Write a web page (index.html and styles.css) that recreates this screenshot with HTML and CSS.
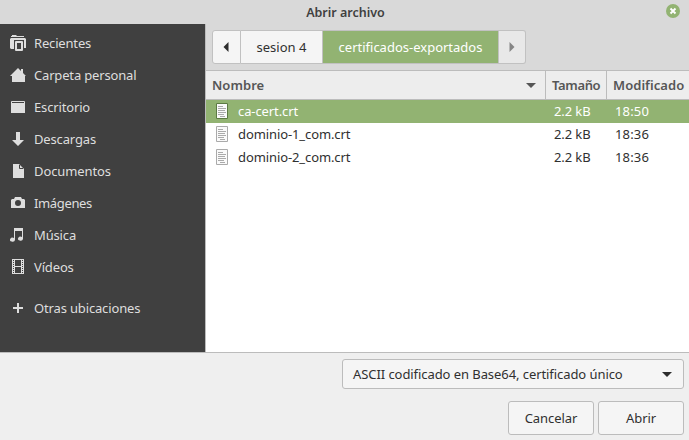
FILE: index.html
```html
<!DOCTYPE html>
<html lang="es">
<head>
<meta charset="utf-8">
<title>Abrir archivo</title>
<link rel="stylesheet" href="styles.css">
</head>
<body>
<div class="dialog">
  <header class="titlebar">
    <h1>Abrir archivo</h1>
    <button class="close" aria-label="Cerrar"><svg width="14" height="14" viewBox="0 0 14 14"><circle cx="7" cy="7" r="7" fill="#92b372"/><path d="M4.500 4.500l5 5M9.500 4.500l-5 5" stroke="#fff" stroke-width="1.900"/></svg></button>
  </header>
  <div class="main">
    <nav class="sidebar">
      <a class="place recent"><svg viewBox="0 0 16 16"><path d="M2 1V0h4l1 1h7v1H1V1zM0 4l1-1h14l1 1v9h-2V5H4v9H1l-1-1z"/><path d="M6 7h6v8H6z" fill="none" stroke="#dedede" stroke-width="2" stroke-linejoin="round"/></svg><span>Recientes</span></a>
      <a class="place home"><svg viewBox="0 0 16 16"><path d="M8 1l3 3V2h2v4l3 3h-1v6H2V9H0z"/></svg><span>Carpeta personal</span></a>
      <a class="place"><svg viewBox="0 0 16 16"><path d="M1 2.500l.5-.5h13l.5.5V14H1z"/><path d="M2 3.500h12" stroke="#404040"/></svg><span>Escritorio</span></a>
      <a class="place"><svg viewBox="0 0 16 16"><path d="M6 1h4v8h4l-6 6-6-6h4z"/></svg><span>Descargas</span></a>
      <a class="place documents"><svg viewBox="0 0 16 16"><path d="M3 1h6l5 5v9H3z"/><path d="M9.500 2v3.500H13" fill="none" stroke="#404040"/></svg><span>Documentos</span></a>
      <a class="place images"><svg viewBox="0 0 16 16"><path fill-rule="evenodd" d="M1 5l1-1h2l1-2h6l1 2h2l1 1v8H1zM8 5a3 3 0 100 6 3 3 0 000-6z"/></svg><span>Imágenes</span></a>
      <a class="place"><svg viewBox="0 0 16 16"><path d="M4 1h9v11a2.500 2 0 1 1-1-2V4H5v9a2.500 2 0 1 1-1-2z"/></svg><span>Música</span></a>
      <a class="place"><svg viewBox="0 0 16 16"><path fill-rule="evenodd" d="M2 0h12v15H2zM5 1h6v6H5zM5 8h6v6H5z"/><path d="M3.500 1v13M12.500 1v13" stroke="#404040" stroke-dasharray="1 1"/></svg><span>Vídeos</span></a>
      <a class="place other"><svg viewBox="0 0 16 16"><path d="M7 3h2v4h4v2H9v4H7V9H3V7h4z"/></svg><span>Otras ubicaciones</span></a>
    </nav>
    <section class="content">
      <div class="pathbar">
        <button class="step"><svg width="6" height="10" viewBox="0 0 6 10"><path d="M5.500 0v10L.5 5z" fill="#2d2d2d"/></svg></button>
        <button class="crumb parent"><span>sesion 4</span></button>
        <button class="crumb current"><span>certificados-exportados</span></button>
        <button class="step next"><svg width="6" height="10" viewBox="0 0 6 10"><path d="M.5 0v10l5-5z" fill="#858585"/></svg></button>
      </div>
      <div class="files">
        <div class="head row">
          <div><span>Nombre</span><svg class="sort" width="10" height="5" viewBox="0 0 10 5"><path d="M0 0h10L5 5z" fill="#555"/></svg></div>
          <div><span class="size-title">Tamaño</span></div>
          <div><span>Modificado</span></div>
        </div>
        <div class="file row selected">
          <div><svg class="doc" viewBox="0 0 12 16"><path d="M.5.5h11v15H.5z"/><path d="M2 3.500h5M2 5.500h8M2 7.500h7M2 9.500h8M2 11.500h6M4 13.500h5"/></svg><span>ca-cert.crt</span></div><div><span>2.2 kB</span></div><div><span class="time">18:50</span></div>
        </div>
        <div class="file row">
          <div><svg class="doc" viewBox="0 0 12 16"><path d="M.5.5h11v15H.5z"/><path d="M2 3.500h5M2 5.500h8M2 7.500h7M2 9.500h8M2 11.500h6M4 13.500h5"/></svg><span>dominio-1_com.crt</span></div><div><span>2.2 kB</span></div><div><span class="time">18:36</span></div>
        </div>
        <div class="file row">
          <div><svg class="doc" viewBox="0 0 12 16"><path d="M.5.5h11v15H.5z"/><path d="M2 3.500h5M2 5.500h8M2 7.500h7M2 9.500h8M2 11.500h6M4 13.500h5"/></svg><span>dominio-2_com.crt</span></div><div><span>2.2 kB</span></div><div><span class="time">18:36</span></div>
        </div>
      </div>
    </section>
  </div>
  <footer class="actions">
    <button class="filter"><span>ASCII codificado en Base64, certificado único</span><svg width="10" height="5" viewBox="0 0 10 5"><path d="M0 0h10L5 5z" fill="#2d2d2d"/></svg></button>
    <div class="buttons">
      <button><span>Cancelar</span></button>
      <button><span>Abrir</span></button>
    </div>
  </footer>
</div>
</body>
</html>
```
FILE: styles.css
```css
* { box-sizing: border-box; }
body { margin: 0; font: 13px/18px "Noto Sans", "Open Sans", sans-serif; color: #303030; }
button { font: inherit; color: inherit; padding: 0; border: 1px solid #bcbcbc; background: #f5f5f5; display: flex; align-items: center; justify-content: center; }
span { white-space: nowrap; }
svg { display: block; flex: none; }
.dialog { width: 689px; height: 440px; display: flex; flex-direction: column; background: #efefef; overflow: hidden; }
.titlebar { flex: none; height: 24px; display: grid; grid-template-columns: 1fr auto 1fr; background: #d9d9d9; align-items: center; padding-right: 9px; }
.titlebar h1 { grid-column: 2; margin: 2px 0 0 11px; font-size: 12.5px; line-height: 18px; font-weight: 600; color: #404040; }
.close { justify-self: end; border: 0; background: none; margin-top: -2px; }
.main { flex: none; height: 329px; display: flex; border-bottom: 1px solid #bcbcbc; }
.sidebar { width: 206px; background: #404040; border-right: 1px solid #bcbcbc; padding-top: 3px; color: #dedede; letter-spacing: -0.15px; }
.place { height: 32px; display: flex; align-items: center; gap: 8px; padding-left: 10px; }
.place svg { width: 16px; height: 16px; fill: #dedede; }
.recent, .home { letter-spacing: -0.17px; }
.documents { letter-spacing: -0.1px; }
.images { letter-spacing: -0.35px; }
.other { margin-top: 9px; }
.content { flex: 1; display: flex; flex-direction: column; background: #d9d9d9; }
.pathbar { display: flex; height: 46px; padding: 6px; letter-spacing: -0.05px; }
.pathbar button { height: 34px; border-color: #c1c1c1; }
.step { width: 29px; border-radius: 3px 0 0 3px; padding-right: 2px; }
.pathbar .crumb { border-left: 0; }
.parent { width: 82px; }
.pathbar .current { width: 176px; background: #92b372; color: #fff; border-right-color: #c1c1c1; }
.next { width: 27px; border-radius: 0 3px 3px 0; background: #e8e8e8; padding: 0; }
.pathbar .next { border-left: 0; }
.files { flex: 1; background: #fff; border-top: 1px solid #bcbcbc; }
.row { display: grid; grid-template-columns: 340px 61px 1fr; }
.row > div { display: flex; align-items: center; }
.head { height: 29px; background: #ededed; border-bottom: 1px solid #bcbcbc; font-weight: 600; color: #565656; letter-spacing: 0.05px; }
.head > div { padding-left: 6px; border-right: 1px solid #bcbcbc; }
.head > div:last-child { border-right: 0; }
.size-title { letter-spacing: -0.35px; }
.sort { margin: 0 9px 0 auto; }
.file { height: 23px; letter-spacing: -0.1px; }
.file > div { padding: 0 0 1px 8px; }
.file > div:first-child { padding-left: 10px; gap: 10px; }
.time { letter-spacing: 0.15px; }
.doc { width: 12px; height: 16px; fill: #fafafa; stroke: #aaa; }
.selected { background: #92b372; color: #fff; }
.selected .doc path:first-child { stroke: #5c7a43; }
.actions { display: flex; flex-direction: column; align-items: flex-end; gap: 12px; padding: 6px 5px 0; }
.actions button { border-radius: 3px; letter-spacing: -0.07px; }
.actions .filter { width: 342px; height: 30px; padding: 0 11px 0 10px; justify-content: space-between; }
.buttons { display: flex; gap: 4px; }
.buttons button { width: 86px; height: 34px; }
```
